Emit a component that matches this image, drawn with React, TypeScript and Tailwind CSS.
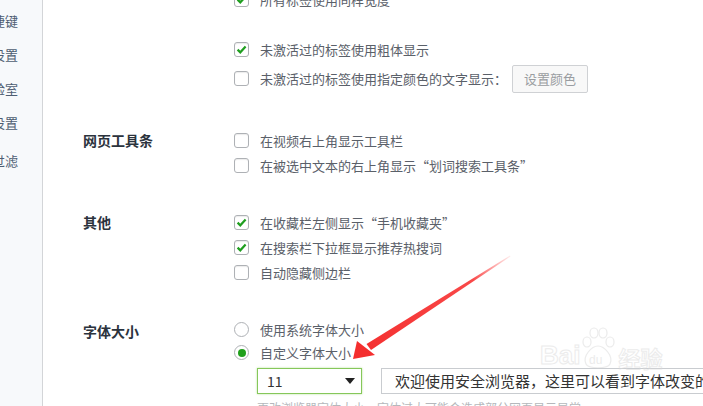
import React from "react";

const cjk = "font-['Noto_Sans_CJK_SC','Noto_Sans',sans-serif]";

const sideItems = ["快捷键", "高级设置", "实验室", "安全设置", "广告过滤"];

const Check = ({ on }: { on?: boolean }) => (
    <span className="flex h-[15px] w-[15px] shrink-0 items-center justify-center rounded-[3px] border border-[#aeb1b5] bg-white shadow-[inset_0_1px_1px_rgba(0,0,0,0.08)]">
        {on && (
            <svg width="11" height="11" viewBox="0 0 11 11">
                <path d="M1.6 5.6 L4.3 8.3 L9.6 2.6" fill="none" stroke="#1f9e1f" strokeWidth="2.2" />
            </svg>
        )}
    </span>
);

const Radio = ({ on }: { on?: boolean }) => (
    <span className="flex h-[15px] w-[15px] shrink-0 items-center justify-center rounded-full border border-[#aeb1b5] bg-white">
        {on && <span className="h-[8px] w-[8px] rounded-full bg-[#20a01c]" />}
    </span>
);

const Row = ({ on, children, h = "h-[25px]", radio }: { on?: boolean; children: React.ReactNode; h?: string; radio?: boolean }) => (
    <div className={`flex items-center gap-[11px] ${h}`}>
        {radio ? <Radio on={on} /> : <Check on={on} />}
        <span className="whitespace-nowrap text-[13px] text-[#5a6069]">{children}</span>
    </div>
);

const Section = ({ label, children, className }: { label?: string; children: React.ReactNode; className?: string }) => (
    <div className={`grid grid-cols-[151px_1fr] ${className ?? ""}`}>
        <div className="h-[25px] text-[14px] font-bold leading-[25px] text-[#2b333d]">{label}</div>
        <div className="flex flex-col">{children}</div>
    </div>
);

export default function App() {
    return (
        <div className={`relative flex h-[406px] w-[703px] overflow-hidden bg-white ${cjk}`}>
            {/* sidebar, scrolled out to the left */}
            <div className="flex w-[43px] shrink-0 flex-col border-r border-[#d3d5d8] bg-[#f7f9fb] pt-[8px]">
                {sideItems.map((s, i) => (
                    <div
                        key={s}
                        className={`flex h-[26px] justify-end overflow-hidden pr-[24px] text-[13px] leading-[26px] text-[#4e5d72] ${i === 4 ? "mt-[12px]" : i > 0 ? "mt-[8px]" : ""}`}
                    >
                        <span className="whitespace-nowrap">{s}</span>
                    </div>
                ))}
            </div>

            <div className="flex-1 pl-[40px]">
                <Section className="-mt-[13px]">
                    <Row on>所有标签使用同样宽度</Row>
                    <div className="mt-[25px]">
                        <Row on>未激活过的标签使用粗体显示</Row>
                    </div>
                    <div className="mt-[2px] flex h-[29px] items-center">
                        <Row>未激活过的标签使用指定颜色的文字显示：</Row>
                        <button className="ml-[5px] h-[28px] w-[76px] rounded-[2px] border border-[#cfd1d4] bg-[#f8f8f8] text-[13px] text-[#9a9da1]">
                            设置颜色
                        </button>
                    </div>
                </Section>

                <Section label="网页工具条" className="mt-[35px]">
                    <Row>在视频右上角显示工具栏</Row>
                    <Row>在被选中文本的右上角显示“划词搜索工具条”</Row>
                </Section>

                <Section label="其他" className="mt-[32px]">
                    <Row on>在收藏栏左侧显示“手机收藏夹”</Row>
                    <Row on>在搜索栏下拉框显示推荐热搜词</Row>
                    <Row>自动隐藏侧边栏</Row>
                </Section>

                <Section label="字体大小" className="mt-[34px]">
                    <div className="-mt-[1px]">
                        <Row radio h="h-[23px]">使用系统字体大小</Row>
                        <Row radio on h="h-[23px]">自定义字体大小</Row>
                    </div>
                    <div className="ml-[23px] mt-[4px] flex h-[26px] items-stretch">
                        <div className="flex w-[105px] items-center justify-between border border-[#86c75a] bg-white pl-[9px] pr-[6px] shadow-[0_0_2px_#b8e29c]">
                            <span className="text-[14px] text-[#333]">11</span>
                            <svg width="10" height="6" viewBox="0 0 10 6">
                                <path d="M0 0 H10 L5 6 Z" fill="#222" />
                            </svg>
                        </div>
                        <div className="ml-[19px] flex w-[360px] shrink-0 items-center border border-[#c9ccd0] pl-[13px]">
                            <span className="whitespace-nowrap text-[15px] text-[#333]">
                                欢迎使用安全浏览器，这里可以看到字体改变的效果
                            </span>
                        </div>
                    </div>
                    <div className="ml-[23px] mt-[5px] whitespace-nowrap text-[12px] text-[#b5b8bc]">
                        更改浏览器字体大小，字体过大可能会造成部分网页显示异常
                    </div>
                </Section>
            </div>

            {/* baidu watermark */}
            <div className="pointer-events-none absolute left-[540px] top-[326px] flex items-end opacity-50">
                <span className="font-['Liberation_Sans',sans-serif] text-[26px] font-bold leading-none text-transparent [-webkit-text-stroke:1px_#d9d9d9]">Bai</span>
                <svg width="36" height="44" viewBox="0 0 36 44" className="-mb-[2px]">
                    <g fill="none" stroke="#d9d9d9" strokeWidth="1.2">
                        <ellipse cx="7" cy="16" rx="4" ry="5" />
                        <ellipse cx="14" cy="7" rx="4" ry="5" />
                        <ellipse cx="23" cy="7" rx="4" ry="5" />
                        <ellipse cx="30" cy="16" rx="4" ry="5" />
                        <path d="M6 38 C2 30 12 20 18 20 C24 20 34 30 30 38 C28 43 8 43 6 38 Z" />
                    </g>
                    <text x="9" y="38" fontSize="12" fontFamily="Liberation Sans" fill="#d9d9d9">du</text>
                </svg>
                <span className="ml-[2px] text-[22px] font-bold leading-none text-transparent [-webkit-text-stroke:1px_#d9d9d9]">经验</span>
            </div>

            {/* annotation arrow */}
            <svg className="pointer-events-none absolute left-0 top-0" width="703" height="406">
                <defs>
                    <linearGradient id="ar" x1="510" y1="256" x2="360" y2="352" gradientUnits="userSpaceOnUse">
                        <stop offset="0" stopColor="#ff3b3b" stopOpacity="0.1" />
                        <stop offset="0.25" stopColor="#f83434" stopOpacity="0.9" />
                        <stop offset="1" stopColor="#f42f2f" />
                    </linearGradient>
                </defs>
                <polygon points="510,255.5 510.5,256.5 371,350 366.5,344" fill="url(#ar)" />
                <polygon points="353,359 357,341 375,355" fill="#f42f2f" />
            </svg>
        </div>
    );
}
